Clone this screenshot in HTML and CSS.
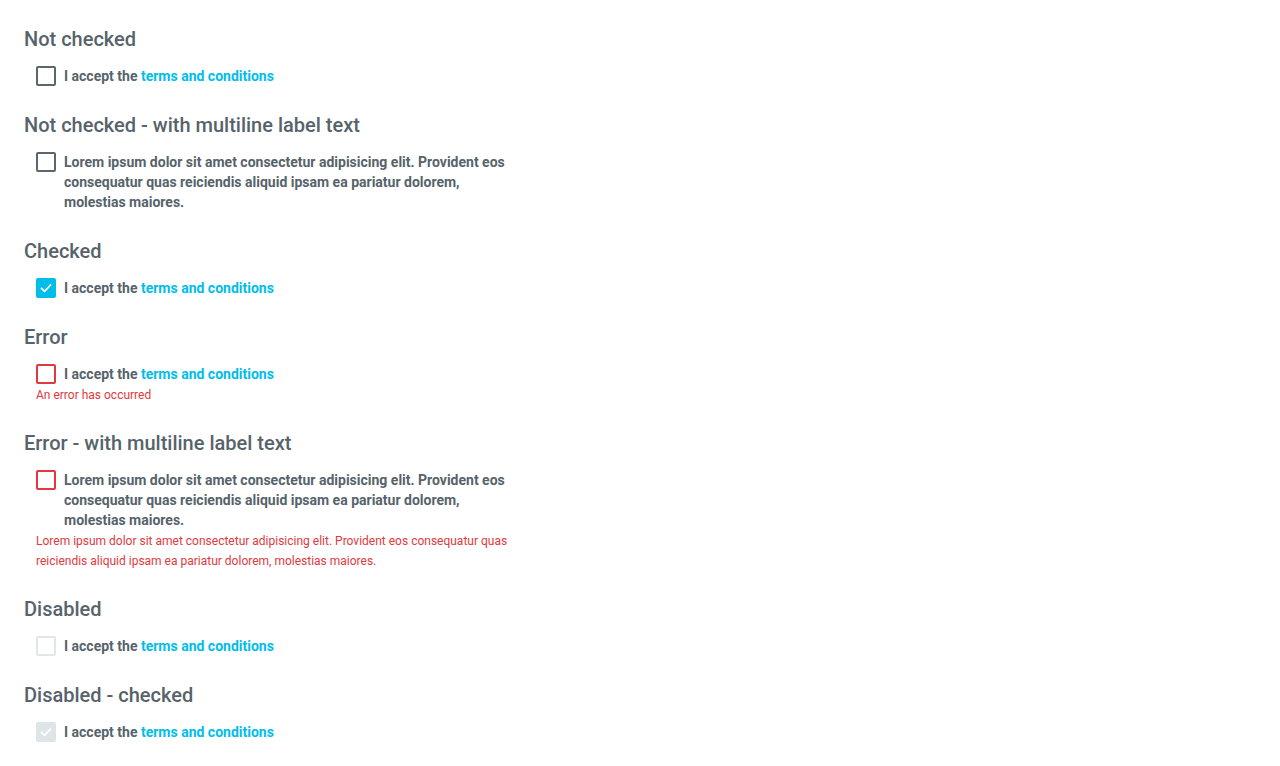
FILE: index.html
```html
<!DOCTYPE html>
<html lang="en">
<head>
<meta charset="utf-8">
<title>Checkbox</title>
<link rel="stylesheet" href="styles.css">
</head>
<body>
<section class="demo">
  <h2 class="demo-title">Not checked</h2>
  <label class="checkbox">
    <span class="box"></span>
    <span class="text">I accept the <a class="link" href="#">terms and conditions</a></span>
  </label>
</section>
<section class="demo">
  <h2 class="demo-title">Not checked - with multiline label text</h2>
  <label class="checkbox">
    <span class="box"></span>
    <span class="text">Lorem ipsum dolor sit amet consectetur adipisicing elit. Provident eos consequatur quas reiciendis aliquid ipsam ea pariatur dolorem, molestias maiores.</span>
  </label>
</section>
<section class="demo">
  <h2 class="demo-title">Checked</h2>
  <label class="checkbox">
    <span class="box box-checked"><svg viewBox="0 0 20 20" class="check"><polyline points="5.5,10.3 8.6,13.3 14.5,7"/></svg></span>
    <span class="text">I accept the <a class="link" href="#">terms and conditions</a></span>
  </label>
</section>
<section class="demo">
  <h2 class="demo-title">Error</h2>
  <label class="checkbox">
    <span class="box box-error"></span>
    <span class="text">I accept the <a class="link" href="#">terms and conditions</a></span>
  </label>
  <p class="error">An error has occurred</p>
</section>
<section class="demo">
  <h2 class="demo-title">Error - with multiline label text</h2>
  <label class="checkbox">
    <span class="box box-error"></span>
    <span class="text">Lorem ipsum dolor sit amet consectetur adipisicing elit. Provident eos consequatur quas reiciendis aliquid ipsam ea pariatur dolorem, molestias maiores.</span>
  </label>
  <p class="error">Lorem ipsum dolor sit amet consectetur adipisicing elit. Provident eos consequatur quas reiciendis aliquid ipsam ea pariatur dolorem, molestias maiores.</p>
</section>
<section class="demo">
  <h2 class="demo-title">Disabled</h2>
  <label class="checkbox">
    <span class="box box-disabled"></span>
    <span class="text">I accept the <a class="link" href="#">terms and conditions</a></span>
  </label>
</section>
<section class="demo">
  <h2 class="demo-title">Disabled - checked</h2>
  <label class="checkbox">
    <span class="box box-disabled-checked"><svg viewBox="0 0 20 20" class="check"><polyline points="5.5,10.3 8.6,13.3 14.5,7"/></svg></span>
    <span class="text">I accept the <a class="link" href="#">terms and conditions</a></span>
  </label>
</section>
</body>
</html>
```
FILE: styles.css
```css
* { box-sizing: border-box; }
body {
  margin: 0;
  padding: 27px 24px 0 24px;
  background: #ffffff;
  font-family: Roboto, "Liberation Sans", sans-serif;
  color: #56636b;
}
.demo {
  margin-bottom: 27px;
}
.demo-title {
  margin: 0 0 15px 0;
  font-size: 20px;
  line-height: 24px;
  font-weight: 500;
  color: #56636b;
}
.checkbox {
  display: flex;
  align-items: flex-start;
  gap: 8px;
  margin-left: 12px;
  width: 478px;
}
.box {
  flex: none;
  width: 20px;
  height: 20px;
  border: 2px solid #5a676e;
  border-radius: 2px;
  background: #fff;
  display: flex;
}
.box-checked {
  background: #00bde9;
  border-color: #00bde9;
}
.box-error {
  border-color: #e0393e;
}
.box-disabled {
  border-color: #e1e6e8;
}
.box-disabled-checked {
  background: #dfe4e6;
  border-color: #dfe4e6;
}
.check {
  width: 20px;
  height: 20px;
  margin: -2px;
  fill: none;
  stroke: #ffffff;
  stroke-width: 1.8;
  stroke-linecap: round;
  stroke-linejoin: round;
}
.text {
  font-size: 14px;
  line-height: 20px;
  font-weight: 700;
  color: #56636b;
}
.link {
  color: #00bde9;
  text-decoration: none;
}
.error {
  margin: 1px 0 -1px 12px;
  width: 478px;
  font-size: 12px;
  line-height: 20px;
  color: #e0393e;
}
```
